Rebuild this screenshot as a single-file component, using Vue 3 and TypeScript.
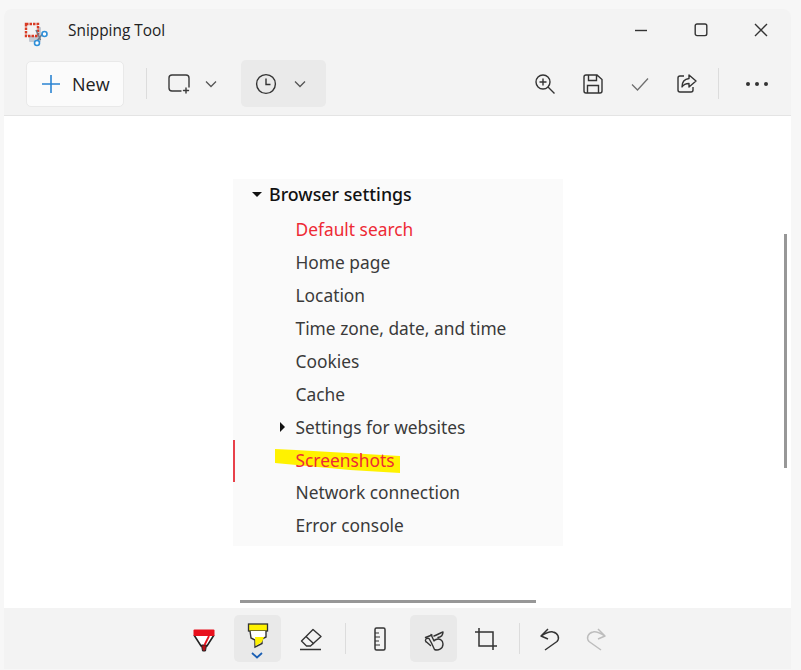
<script setup lang="ts">
interface Row { label: string; red?: boolean; arrow?: boolean; mark?: boolean }
const rows: Row[] = [
  { label: 'Default search', red: true },
  { label: 'Home page' },
  { label: 'Location' },
  { label: 'Time zone, date, and time' },
  { label: 'Cookies' },
  { label: 'Cache' },
  { label: 'Settings for websites', arrow: true },
  { label: 'Screenshots', red: true, mark: true },
  { label: 'Network connection' },
  { label: 'Error console' },
]
</script>

<template>
  <div class="page">
    <div class="window">
      <header class="titlebar">
        <svg class="appicon" width="26" height="26" viewBox="0 0 26 26" fill="none">
          <rect x="5" y="6" width="12" height="15" rx="1" fill="#c3c9d2" />
          <rect x="2" y="3" width="12" height="12" fill="#f3f3f3" stroke="#d83b24" stroke-width="2.400" stroke-dasharray="2.500 1" />
          <path d="M12 9 L16.500 19 M20 11 L13 20" stroke="#6f7b88" stroke-width="1.500" />
          <circle cx="20.500" cy="13" r="2.500" stroke="#2f8fd8" stroke-width="1.600" fill="#fff" />
          <circle cx="13" cy="22" r="2.500" stroke="#2f8fd8" stroke-width="1.600" fill="#fff" />
        </svg>
        <span class="title">Snipping Tool</span>
        <div class="winctrls">
          <svg width="14" height="14" viewBox="0 0 14 14"><path d="M1 7.500h12" stroke="#333" stroke-width="1.400" /></svg>
          <svg width="14" height="14" viewBox="0 0 14 14" fill="none"><rect x="1.200" y="1" width="11.600" height="11.600" rx="1.800" stroke="#333" stroke-width="1.400" /></svg>
          <svg width="14" height="14" viewBox="0 0 14 14"><path d="M1 1l12 12M13 1L1 13" stroke="#333" stroke-width="1.400" /></svg>
        </div>
      </header>

      <div class="toolbar">
        <button class="newbtn">
          <svg width="20" height="20" viewBox="0 0 20 20"><path d="M10 1v18M1 10h18" stroke="#2b84d2" stroke-width="1.600" /></svg>
          <span>New</span>
        </button>
        <i class="sep sep-a"></i>
        <div class="drop plain">
          <svg width="24" height="22" viewBox="0 0 24 22" fill="none"><path d="M14 18H5a3 3 0 0 1-3-3V5a3 3 0 0 1 3-3h14a3 3 0 0 1 3 3v9M19 15v5M16.500 17.500h5" stroke="#3a3a3a" stroke-width="1.400" stroke-linecap="round" /></svg>
          <svg width="12" height="8" viewBox="0 0 12 8" fill="none"><path d="M1 1.500l5 5 5-5" stroke="#555" stroke-width="1.300" /></svg>
        </div>
        <div class="drop active">
          <svg width="22" height="22" viewBox="0 0 22 22" fill="none"><circle cx="11" cy="11" r="9.400" stroke="#333" stroke-width="1.400" /><path d="M11 5.500V11.500H15.500" stroke="#333" stroke-width="1.400" /></svg>
          <svg width="12" height="8" viewBox="0 0 12 8" fill="none"><path d="M1 1.500l5 5 5-5" stroke="#555" stroke-width="1.300" /></svg>
        </div>
        <div class="actions">
          <svg width="22" height="22" viewBox="0 0 22 22" fill="none"><circle cx="9" cy="9" r="7" stroke="#333" stroke-width="1.400" /><path d="M14 14l6.500 6.500M9 5.500v7M5.500 9h7" stroke="#333" stroke-width="1.400" /></svg>
          <svg width="22" height="22" viewBox="0 0 22 22" fill="none"><path d="M4 2h11l5 4.500V18a2 2 0 0 1-2 2H4a2 2 0 0 1-2-2V4a2 2 0 0 1 2-2z M6.500 2.500v5h8v-5 M5.500 20v-7.500h11V20" stroke="#333" stroke-width="1.400" /></svg>
          <svg width="20" height="16" viewBox="0 0 20 16" fill="none"><path d="M2 8.500l5.500 5.500L18 2.500" stroke="#6f6f6f" stroke-width="1.300" /></svg>
          <svg width="22" height="22" viewBox="0 0 22 22" fill="none"><path d="M8 3H4a2 2 0 0 0-2 2v12a2 2 0 0 0 2 2h11a2 2 0 0 0 2-2v-3" stroke="#333" stroke-width="1.400" /><path d="M13 2l7 6-7 6v-3.500c-3.500 0-5.500 1-7 3.500 0-5 2.500-8 7-8.500z" stroke="#333" stroke-width="1.400" stroke-linejoin="round" /></svg>
          <i class="sep sep-b"></i>
          <svg width="24" height="6" viewBox="0 0 24 6"><circle cx="3" cy="3" r="2" fill="#333" /><circle cx="12" cy="3" r="2" fill="#333" /><circle cx="21" cy="3" r="2" fill="#333" /></svg>
        </div>
      </div>

      <main class="canvas">
        <section class="panel">
          <div class="heading"><span class="tri-down"></span>Browser settings</div>
          <ul class="list">
            <li v-for="row in rows" :key="row.label" :class="{ red: row.red }">
              <span v-if="row.arrow" class="tri-right"></span>
              <template v-if="row.mark">
                <i class="marker"></i>
                <svg class="hl" width="126" height="26" viewBox="0 0 126 26"><path d="M0 1L21 2L125 8L125 25L75 22L0 15Z" fill="#fff200" /></svg>
              </template>
              <span class="lbl">{{ row.label }}</span>
            </li>
          </ul>
        </section>
        <i class="vbar"></i>
        <i class="hbar"></i>
      </main>

      <footer class="bottombar">
        <svg width="26" height="26" viewBox="0 0 26 26" fill="none"><path d="M3 9l7 11h6L23 9" fill="#fff" stroke="#222" stroke-width="1.600" /><rect x="2.500" y="3.500" width="21" height="6.500" rx="1" fill="#e8101c" /><path d="M10.500 19h5l-1 6h-3z" fill="#b81018" stroke="#222" stroke-width="1" /><path d="M18 10l-4.500 9" stroke="#e8101c" stroke-width="1.800" /></svg>
        <div class="tool active">
          <svg class="hi" width="24" height="28" viewBox="0 0 24 28" fill="none"><rect x="2.500" y="2" width="19" height="7" fill="#fff200" stroke="#333" stroke-width="1.300" /><path d="M4 9l1 7 4 2v7l7-3.500V17l4-2V9" fill="#fff" stroke="#333" stroke-width="1.400" /><path d="M9 15h9l-2 5-6.500 4z" fill="#fff200" /></svg>
          <svg class="caret" width="12" height="7" viewBox="0 0 12 7" fill="none"><path d="M1 1l5 4.500L11 1" stroke="#1a5fb4" stroke-width="1.800" /></svg>
        </div>
        <svg width="26" height="26" viewBox="0 0 26 26" fill="none"><path d="M15 3.500L23 10.500 12.500 20H8.500L3.500 15z M8 10.500L16 18M2 23.500H23" stroke="#333" stroke-width="1.400" stroke-linejoin="round" /></svg>
        <i class="sep"></i>
        <svg width="26" height="26" viewBox="0 0 26 26" fill="none"><rect x="8" y="2" width="10" height="22" rx="1.500" stroke="#333" stroke-width="1.500" /><path d="M8 7h4M8 11h5M8 15h4M8 19h5" stroke="#333" stroke-width="1.200" /></svg>
        <div class="tool active">
          <svg width="26" height="26" viewBox="0 0 26 26" fill="none"><path d="M4.500 11.500L11 9M5 16C3.500 13.500 5 12 8 12.500L11 18M5.500 16L9.500 19.500M13 10C16 9 19 7 22 6C22 9 20 11 17 11.500M10 8.500L13 15M10 16L13.500 23.500C17 25 22 23 22 18C22 14 18 12 15 13.500L13 14.500" stroke="#333" stroke-width="1.400" stroke-linejoin="round" stroke-linecap="round" /></svg>
        </div>
        <svg width="24" height="24" viewBox="0 0 24 24" fill="none"><path d="M1 5H19V23M5 1V19H23" stroke="#333" stroke-width="1.500" /></svg>
        <i class="sep"></i>
        <svg class="undo" width="24" height="26" viewBox="0 0 24 26" fill="none"><path d="M10 3L3 10L10 13M3 10C8 7 12 5 15 6C20 7 22 12 19 15.500L7 24" stroke="#333" stroke-width="1.500" stroke-linejoin="round" /></svg>
        <svg class="redo" width="24" height="26" viewBox="0 0 24 26" fill="none"><path d="M14 3L21 10L14 13M21 10C16 7 12 5 9 6C4 7 2 12 5 15.500L17 24" stroke="#bdbdbd" stroke-width="1.500" stroke-linejoin="round" /></svg>
      </footer>
    </div>
  </div>
</template>

<style>
html, body { margin: 0; background: #f7f7f7; }
</style>

<style scoped>
.page {
  width: 801px;
  height: 670px;
  box-sizing: border-box;
  padding: 9px 10px 1px 4px;
  background: #f7f7f7;
  font-family: "Open Sans", "Noto Sans", sans-serif;
  overflow: hidden;
}
.window {
  height: 100%;
  display: flex;
  flex-direction: column;
  background: #f3f3f3;
  border-radius: 8px 8px 0 0;
}
.titlebar {
  height: 45px;
  flex: none;
  display: flex;
  align-items: center;
  padding: 0 23px 0 20px;
  box-sizing: border-box;
}
.appicon { margin-top: 5px; }
.title { margin-left: 18px; font-size: 15.400px; color: #222; margin-top: -2px; }
.winctrls { margin-left: auto; display: flex; gap: 46px; margin-top: -3px; }
.toolbar {
  height: 62px;
  flex: none;
  box-sizing: border-box;
  padding: 6px 22px 8px 22px;
  display: flex;
  align-items: center;
  border-bottom: 1px solid #e4e4e4;
}
.newbtn {
  width: 98px;
  height: 46px;
  border: 1px solid #e9e9e9;
  border-radius: 5px;
  background: #fbfbfb;
  display: flex;
  align-items: center;
  gap: 11px;
  padding: 0 0 0 14px;
  font: 18px "Open Sans", sans-serif;
  color: #222;
  box-sizing: border-box;
}
.sep { width: 1px; height: 31px; background: #dcdcdc; display: block; flex: none; }
.sep-a { margin: 0 20px 0 22px; }
.sep-b { margin-left: -6px; }
.drop {
  height: 47px;
  border-radius: 5px;
  display: flex;
  align-items: center;
  box-sizing: border-box;
}
.drop.plain { width: 74px; gap: 14px; }
.drop.active { width: 85px; gap: 17px; padding-left: 14px; background: #eaeaea; }
.actions { margin-left: auto; display: flex; align-items: center; gap: 26px; }
.canvas {
  position: relative;
  flex: none;
  height: 492px;
  background: #fff;
  padding: 63px 0 0 229px;
  box-sizing: border-box;
}
.panel {
  width: 330px;
  height: 367px;
  background: #fafafa;
  box-sizing: border-box;
  padding-left: 36px;
  font-family: "Noto Sans", sans-serif;
  position: relative;
}
.heading {
  height: 34.300px;
  line-height: 30px;
  font-size: 17.800px;
  color: #111;
  font-weight: 500;
  position: relative;
}
.tri-down {
  position: absolute;
  left: -17px;
  top: 13px;
  border: 5px solid transparent;
  border-top: 5px solid #111;
  border-bottom: 0;
}
.list { list-style: none; margin: 0; padding: 0 0 0 26.500px; }
.list li {
  height: 32.900px;
  line-height: 32.900px;
  font-size: 17.350px;
  color: #3a3a3a;
  position: relative;
}
.list li.red { color: #ee2a35; }
.lbl { position: relative; }
.tri-right {
  position: absolute;
  left: -16px;
  top: 11px;
  border: 5px solid transparent;
  border-left: 5px solid #111;
  border-right: 0;
}
.marker {
  position: absolute;
  left: -62.500px;
  top: -4px;
  width: 2px;
  height: 42px;
  background: #e8414a;
}
.hl { position: absolute; left: -20.500px; top: 4px; }
.vbar { position: absolute; right: 4px; top: 118px; width: 3px; height: 234px; background: #979797; }
.hbar { position: absolute; left: 236px; bottom: 5px; width: 296px; height: 3px; background: #979797; }
.bottombar {
  flex: 1;
  display: flex;
  align-items: center;
  padding-left: 187px;
  gap: 17px;
  box-sizing: border-box;
}
.bottombar .sep { margin: 0 4px; }
.tool {
  width: 47px;
  height: 47px;
  border-radius: 5px;
  display: flex;
  align-items: center;
  justify-content: center;
  position: relative;
  flex: none;
}
.tool.active { background: #e9e9e9; }
.hi { margin-top: -6px; }
.caret { position: absolute; left: 17px; bottom: 3px; }
.undo { margin-left: -3px; }
.redo { margin-left: 5px; }
</style>
